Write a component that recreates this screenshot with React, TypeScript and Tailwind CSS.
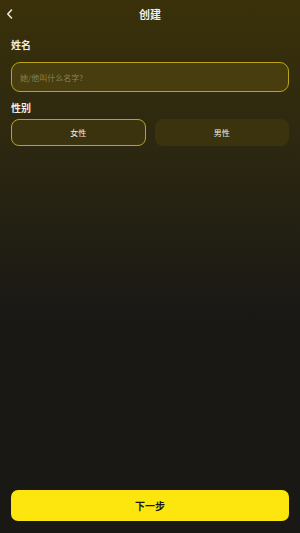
import { useState } from 'react';

const App = () => {
  const [gender, setGender] = useState<'female' | 'male'>('female');
  const [name, setName] = useState('');

  return (
    <div
      className="flex h-[533px] w-full flex-col bg-linear-to-b from-[#3a3109] from-0% via-[#2c2710] via-[28%] to-[#191815] to-[60%] text-white"
      style={{ fontFamily: '"Noto Sans CJK SC", "Noto Sans", sans-serif' }}
    >
      <div className="relative flex h-[28px] items-center justify-center">
        <button className="absolute left-[4px] top-[7px] flex h-[14px] w-[10px] items-center justify-center">
          <svg width="7" height="10" viewBox="0 0 7 10" fill="none">
            <path d="M5.5 1 L1.8 5 L5.5 9" stroke="#e8e6dc" strokeWidth="1.6" strokeLinecap="round" strokeLinejoin="round" />
          </svg>
        </button>
        <h1 className="text-[11px] font-bold leading-none text-[#f0efe8]">创建</h1>
      </div>

      <div className="flex flex-col px-[11px]">
        <label className="mt-[12px] text-[10px] font-bold leading-none text-[#eeede6]">姓名</label>
        <input
          value={name}
          onChange={(e) => setName(e.target.value)}
          placeholder="她/他叫什么名字?"
          className="mt-[12px] h-[30px] w-full rounded-[9px] border-[1.5px] border-[#bca514] bg-[#473d0e] px-[8px] text-[8px] text-[#ddd] outline-none placeholder:text-[#8a8157]"
        />

        <label className="mt-[11px] text-[10px] font-bold leading-none text-[#eeede6]">性别</label>
        <div className="mt-[6px] grid grid-cols-2 gap-[9px]">
          <button
            onClick={() => setGender('female')}
            className={
              gender === 'female'
                ? 'h-[27px] rounded-[8px] border-[1.5px] border-[#bca514] bg-[#3b330d] text-[8px] text-[#efeee6]'
                : 'h-[27px] rounded-[8px] border-[1.5px] border-transparent bg-[#3b330d] text-[8px] text-[#efeee6]'
            }
          >
            女性
          </button>
          <button
            onClick={() => setGender('male')}
            className={
              gender === 'male'
                ? 'h-[27px] rounded-[8px] border-[1.5px] border-[#bca514] bg-[#3b330d] text-[8px] text-[#efeee6]'
                : 'h-[27px] rounded-[8px] border-[1.5px] border-transparent bg-[#3b330d] text-[8px] text-[#efeee6]'
            }
          >
            男性
          </button>
        </div>
      </div>

      <div className="mt-auto px-[11px] pb-[12px]">
        <button className="h-[31px] w-full rounded-[7px] bg-[#fde60d] text-[10px] font-bold text-[#1a1a12]">
          下一步
        </button>
      </div>
    </div>
  );
};

export default App;
